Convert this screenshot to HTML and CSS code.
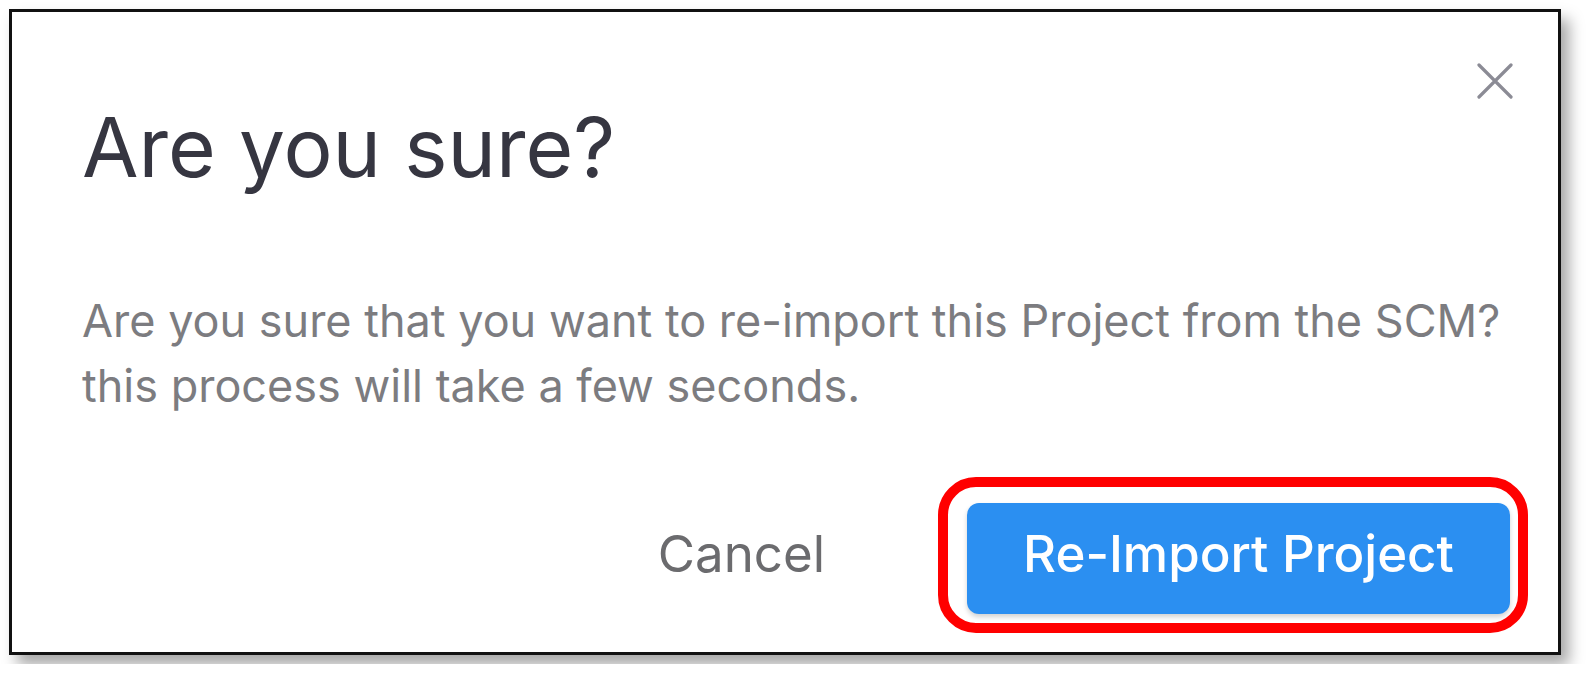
FILE: index.html
```html
<!DOCTYPE html>
<html lang="en">
<head>
    <meta charset="UTF-8">
    <meta name="viewport" content="width=device-width, initial-scale=1.0">
    <title>Are you sure?</title>
    <link rel="stylesheet" href="styles.css">
</head>
<body>
    <div class="dialog">
        <div class="dialog-head">
            <h2>Are you sure?</h2>
            <button class="close" type="button" aria-label="Close">
                <svg width="36" height="36" viewBox="0 0 36 36">
                    <path d="M2 2 L34 34 M34 2 L2 34" stroke="#8b8b95" stroke-width="3.2" stroke-linecap="round" fill="none" />
                </svg>
            </button>
        </div><!-- .dialog-head END -->

        <p class="dialog-body">Are you sure that you want to re-import this Project from the SCM?<br>this process will take a few seconds.</p>

        <div class="dialog-foot">
            <button class="btn-cancel" type="button">Cancel</button>
            <div class="highlight">
                <button class="btn-primary" type="button">Re-Import Project</button>
            </div>
        </div><!-- .dialog-foot END -->
    </div><!-- .dialog END -->
</body>
</html>
```

FILE: styles.css
```css
* {
    margin: 0;
    padding: 0;
    box-sizing: border-box;
}
body {
    background-color: #fff;
    font-family: Inter, "Noto Sans", sans-serif;
}
.dialog {
    width: 1552px;
    height: 646px;
    margin: 9px;
    border: 3px solid #111;
    background-color: #fff;
    box-shadow: 8px 10px 14px rgba(0, 0, 0, 0.35);
    padding: 51px 45px 0 70px;
    display: flex;
    flex-direction: column;
}
.dialog-head {
    display: flex;
    justify-content: space-between;
    align-items: flex-start;
}
.dialog-head h2 {
    margin-top: 37px;
    font-size: 82px;
    line-height: 96px;
    font-weight: 400;
    color: #363641;
}
.close {
    border: 0;
    background: none;
    width: 36px;
    height: 36px;
    display: block;
}
.close svg {
    display: block;
}
.dialog-body {
    margin-top: 92px;
    font-size: 45px;
    line-height: 65px;
    color: #7c7c80;
}
.dialog-foot {
    margin-top: 85px;
    margin-right: 3px;
    display: flex;
    justify-content: flex-end;
    align-items: center;
    gap: 142px;
}
.btn-cancel {
    border: 0;
    background: none;
    font-family: inherit;
    font-size: 51px;
    line-height: 50px;
    padding: 26px 0 35px;
    color: #6b6b6e;
}
.highlight {
    position: relative;
}
/* 빨간 강조 테두리 */
.highlight::before {
    content: '';
    position: absolute;
    top: -26px;
    left: -29px;
    right: -18px;
    bottom: -19px;
    border: 10px solid #ff0000;
    border-radius: 38px;
}
.btn-primary {
    display: block;
    width: 543px;
    height: 111px;
    border: 0;
    border-radius: 12px;
    background-color: #2b8ff1;
    box-shadow: 0 3px 5px rgba(0, 0, 0, 0.18);
    color: #fff;
    font-family: inherit;
    font-size: 51px;
    font-weight: 500;
    line-height: 50px;
    padding: 26px 0 35px;
}
```
